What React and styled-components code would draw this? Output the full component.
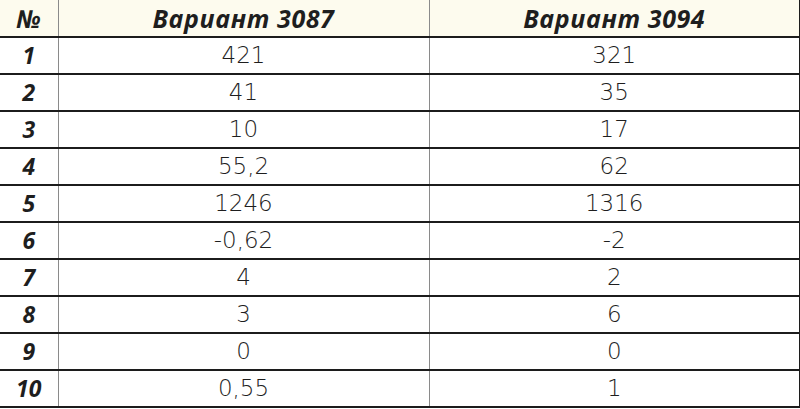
import React from 'react';
import styled, { createGlobalStyle } from 'styled-components';

const GlobalStyle = createGlobalStyle`
  body {
    margin: 0;
    background: #fff;
  }
`;

const Table = styled.table`
  width: 800px;
  border-collapse: collapse;
  table-layout: fixed;
  font-family: "Open Sans", "DejaVu Sans", sans-serif;
  color: #1e1e1e;
`;

const HeadRow = styled.tr`
  background: #fdfbee;
  height: 37px;
`;

const Row = styled.tr`
  height: 37px;
`;

const Cell = styled.td`
  padding: 0;
  text-align: center;
  border-bottom: 2px solid #1c1c1c;
  border-left: 1px solid #8a8a8a;
  font-family: ${(p) => (p.$num ? '"Open Sans", sans-serif' : '"DejaVu Sans", sans-serif')};
  font-size: ${(p) => (p.$num ? '23px' : '23px')};
  font-weight: ${(p) => (p.$num ? 700 : 200)};
  font-style: ${(p) => (p.$num ? 'italic' : 'normal')};
  line-height: 35px;

  &:first-child {
    border-left: none;
  }
  &:last-child {
    border-right: 2px solid #1c1c1c;
  }
`;

const HeadCell = styled(Cell)`
  font-family: "Open Sans", sans-serif;
  font-size: 25px;
  font-weight: 700;
  font-style: italic;
  letter-spacing: 0.6px;
`;

const rows = [
  ['1', '421', '321'],
  ['2', '41', '35'],
  ['3', '10', '17'],
  ['4', '55,2', '62'],
  ['5', '1246', '1316'],
  ['6', '-0,62', '-2'],
  ['7', '4', '2'],
  ['8', '3', '6'],
  ['9', '0', '0'],
  ['10', '0,55', '1'],
];

export default function App() {
  return (
    <>
      <GlobalStyle />
      <Table>
        <colgroup>
          <col style={{ width: 58 }} />
          <col style={{ width: 371 }} />
          <col style={{ width: 371 }} />
        </colgroup>
        <thead>
          <HeadRow>
            <HeadCell>№</HeadCell>
            <HeadCell>Вариант 3087</HeadCell>
            <HeadCell>Вариант 3094</HeadCell>
          </HeadRow>
        </thead>
        <tbody>
          {rows.map(([n, a, b]) => (
            <Row key={n}>
              <Cell $num>{n}</Cell>
              <Cell>{a}</Cell>
              <Cell>{b}</Cell>
            </Row>
          ))}
        </tbody>
      </Table>
    </>
  );
}
